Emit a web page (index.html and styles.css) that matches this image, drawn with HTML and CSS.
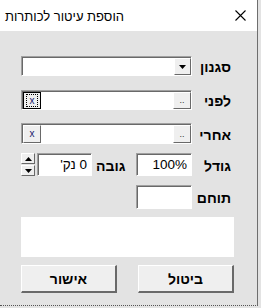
FILE: index.html
```html
<!DOCTYPE html>
<html lang="he">
<head>
<meta charset="utf-8">
<link rel="stylesheet" href="styles.css">
</head>
<body>
<div class="window">
  <div class="titlebar">
    <span class="title" dir="rtl">הוספת עיטור לכותרות</span>
    <svg class="close" width="11" height="11" viewBox="0 0 11 11"><path d="M0.5 0.5 L10.5 10.5 M10.5 0.5 L0.5 10.5" stroke="#000" stroke-width="1.1" fill="none"/></svg>
  </div>
  <div class="content" dir="rtl">
    <div class="row r1">
      <span class="label">סגנון</span>
      <div class="field wide combo">
        <span class="btn drop"><svg width="7" height="4" viewBox="0 0 7 4"><path d="M0 0 H7 L3.5 4 Z" fill="#000"/></svg></span>
        <span class="fill"></span>
      </div>
    </div>
    <div class="row r2">
      <span class="label">לפני</span>
      <div class="field wide">
        <span class="btn dots">..</span>
        <span class="fill"></span>
        <span class="btn xbtn focus"><span class="focusring">x</span></span>
      </div>
    </div>
    <div class="row r3">
      <span class="label">אחרי</span>
      <div class="field wide">
        <span class="btn dots">..</span>
        <span class="fill"></span>
        <span class="btn xbtn"><span class="xtext">x</span></span>
      </div>
    </div>
    <div class="row r4">
      <span class="label">גודל</span>
      <div class="field small"><span class="val" dir="ltr">100%</span></div>
      <span class="label mid">גובה</span>
      <div class="field pts"><span class="val">0 נק'</span></div>
      <div class="spin">
        <span class="btn sp"><svg width="7" height="4" viewBox="0 0 7 4"><path d="M0 4 H7 L3.5 0 Z" fill="#000"/></svg></span>
        <span class="btn sp"><svg width="7" height="4" viewBox="0 0 7 4"><path d="M0 0 H7 L3.5 4 Z" fill="#000"/></svg></span>
      </div>
    </div>
    <div class="row r5">
      <span class="label">תוחם</span>
      <div class="field small tall"></div>
    </div>
    <div class="preview"></div>
    <div class="buttons">
      <span class="pbtn">ביטול</span>
      <span class="pbtn">אישור</span>
    </div>
  </div>
</div>
</body>
</html>
```
FILE: styles.css
```css
html, body {
  margin: 0;
  padding: 0;
}
body {
  width: 261px;
  height: 308px;
  overflow: hidden;
  background: #e3e3e3;
  font-family: "Liberation Sans", "DejaVu Sans", sans-serif;
}
.window {
  width: 257px;
  height: 305px;
  background: #e3e3e3;
  border-right: 1px solid #6e6e6e;
  border-bottom: 1px dotted #555;
}
.titlebar {
  height: 31px;
  background: #fff;
  display: flex;
  align-items: center;
  justify-content: space-between;
  padding: 0 11px 0 5px;
}
.title {
  font-size: 13px;
  color: #000;
  margin-top: 1px;
}
.close {
  display: block;
}
.content {
  padding: 0 23px 0 21px;
}
.row {
  display: flex;
  align-items: center;
}
.r1 { margin-top: 25px; height: 20px; }
.r2 { margin-top: 14px; height: 20px; }
.r3 { margin-top: 13px; height: 21px; }
.r4 { margin-top: 9px; height: 23px; }
.r5 { margin-top: 9px; height: 24px; }
.label {
  box-sizing: border-box;
  width: 42px;
  padding-right: 3px;
  font-weight: bold;
  font-size: 14px;
  color: #000;
  line-height: 16px;
  padding-top: 2px;
}
.label.mid {
  width: 44px;
  padding: 2px 3px 0 4px;
  text-align: left;
}
.field {
  box-sizing: border-box;
  height: 100%;
  background: #fff;
  border-top: 1px solid #a0a0a0;
  border-left: 1px solid #a0a0a0;
  border-bottom: 1px solid #fff;
  border-right: 1px solid #fff;
  box-shadow: inset 1px 1px 0 #696969;
  display: flex;
  align-items: stretch;
  padding: 1px 0 0 1px;
}
.wide {
  width: 171px;
}
.fill {
  flex: 1;
}
.btn {
  box-sizing: border-box;
  background: #efefef;
  border-top: 1px solid #fff;
  border-left: 1px solid #fff;
  border-bottom: 1px solid #696969;
  border-right: 1px solid #696969;
  display: flex;
  align-items: center;
  justify-content: center;
}
.drop {
  width: 17px;
}
.dots {
  width: 18px;
  font-size: 9px;
  line-height: 9px;
  align-items: flex-end;
  padding-bottom: 3px;
  color: #333;
}
.xbtn {
  width: 18px;
  font-size: 10px;
  color: #1a1a6e;
}
.xbtn.focus {
  border: 1px solid #000;
}
.focusring {
  width: 12px;
  height: 13px;
  box-sizing: border-box;
  border: 1px dotted #000;
  display: flex;
  align-items: center;
  justify-content: center;
  line-height: 10px;
}
.xtext {
  line-height: 10px;
}
.small {
  width: 56px;
}
.tall {
  height: 24px;
}
.pts {
  width: 55px;
}
.val {
  font-size: 13.5px;
  color: #000;
  padding: 0 4px 0 0;
  line-height: 20px;
}
.spin {
  display: flex;
  flex-direction: column;
  height: 23px;
  margin-right: 2px;
}
.sp {
  width: 14px;
  height: 11px;
}
.sp + .sp {
  margin-top: 1px;
}
.preview {
  margin-top: 8px;
  height: 40px;
  width: 213px;
  background: #fff;
}
.buttons {
  margin-top: 8px;
  display: flex;
  justify-content: space-between;
  width: 213px;
}
.pbtn {
  box-sizing: border-box;
  width: 96px;
  height: 28px;
  background: #efefef;
  border-top: 1px solid #fff;
  border-left: 1px solid #fff;
  border-right: 2px solid #696969;
  border-bottom: 2px solid #696969;
  display: flex;
  align-items: center;
  justify-content: center;
  font-weight: bold;
  font-size: 14px;
  color: #000;
}
```
